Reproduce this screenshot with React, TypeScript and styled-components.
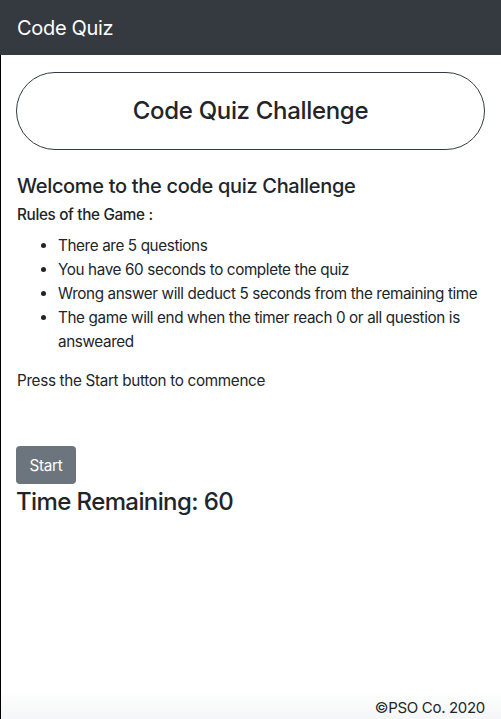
import React from "react";
import styled, { createGlobalStyle } from "styled-components";

const Global = createGlobalStyle`
  html, body { margin: 0; padding: 0; background: #fff; }
  body {
    font-family: Inter, "Noto Sans", "Liberation Sans", sans-serif;
    color: #212529;
    letter-spacing: -0.02em;
  }
  * { box-sizing: border-box; }
`;

const Page = styled.div`
  min-height: 719px;
  display: flex;
  flex-direction: column;
`;

const NavBar = styled.header`
  height: 55px;
  background: #343a40;
  display: flex;
  align-items: center;
  padding: 0 17px;
`;

const Brand = styled.span`
  color: #fff;
  font-size: 20px;
  font-weight: 400;
`;

const Body = styled.div`
  flex: 1;
  display: flex;
  flex-direction: column;
  border-left: 1px solid #000;
`;

const Main = styled.main`
  flex: 1;
  padding: 17px 16px 0 15px;
  display: flex;
  flex-direction: column;
  font-size: 15.25px;
  line-height: 24px;
`;

const TitlePill = styled.div`
  height: 78px;
  border: 1px solid #343a40;
  border-radius: 40px;
  display: flex;
  align-items: center;
  justify-content: center;
  font-size: 24px;
  font-weight: 500;
`;

const Welcome = styled.h5`
  margin: 24px 0 0 1px;
  font-size: 20px;
  font-weight: 500;
  line-height: 24px;
`;

const Rules = styled.h6`
  margin: 5px 0 0 1px;
  font-size: 15.25px;
  font-weight: 500;
  line-height: 24px;
`;

const List = styled.ul`
  margin: 7px 0 0 0;
  padding-left: 42px;
  letter-spacing: -0.025em;
`;

const Para = styled.p`
  margin: 15px 0 0 1px;
`;

const StartButton = styled.button`
  margin-top: 53px;
  align-self: flex-start;
  width: 60px;
  height: 38px;
  background: #6c757d;
  color: #fff;
  border: none;
  border-radius: 4px;
  font-family: inherit;
  letter-spacing: inherit;
  font-size: 15.25px;
  padding: 0;
`;

const Timer = styled.h4`
  margin: 4px 0 0 0;
  font-size: 24px;
  font-weight: 500;
  line-height: 28px;
  letter-spacing: -0.025em;
`;

const Footer = styled.footer`
  height: 30px;
  display: flex;
  align-items: flex-end;
  justify-content: flex-end;
  padding: 0 16px 2px 0;
  background: linear-gradient(#fff, #f5f6f7);
  font-size: 15px;
  line-height: 18px;
`;

const FooterText = styled.span``;

export default function App() {
  return (
    <Page>
      <Global />
      <NavBar>
        <Brand>Code Quiz</Brand>
      </NavBar>
      <Body>
        <Main>
          <TitlePill>Code Quiz Challenge</TitlePill>
          <Welcome>Welcome to the code quiz Challenge</Welcome>
          <Rules>Rules of the Game :</Rules>
          <List>
            <li>There are 5 questions</li>
            <li>You have 60 seconds to complete the quiz</li>
            <li>Wrong answer will deduct 5 seconds from the remaining time</li>
            <li>The game will end when the timer reach 0 or all question is answeared</li>
          </List>
          <Para>Press the Start button to commence</Para>
          <StartButton>Start</StartButton>
          <Timer>Time Remaining: 60</Timer>
        </Main>
        <Footer>
          <FooterText>©PSO Co. 2020</FooterText>
        </Footer>
      </Body>
    </Page>
  );
}
